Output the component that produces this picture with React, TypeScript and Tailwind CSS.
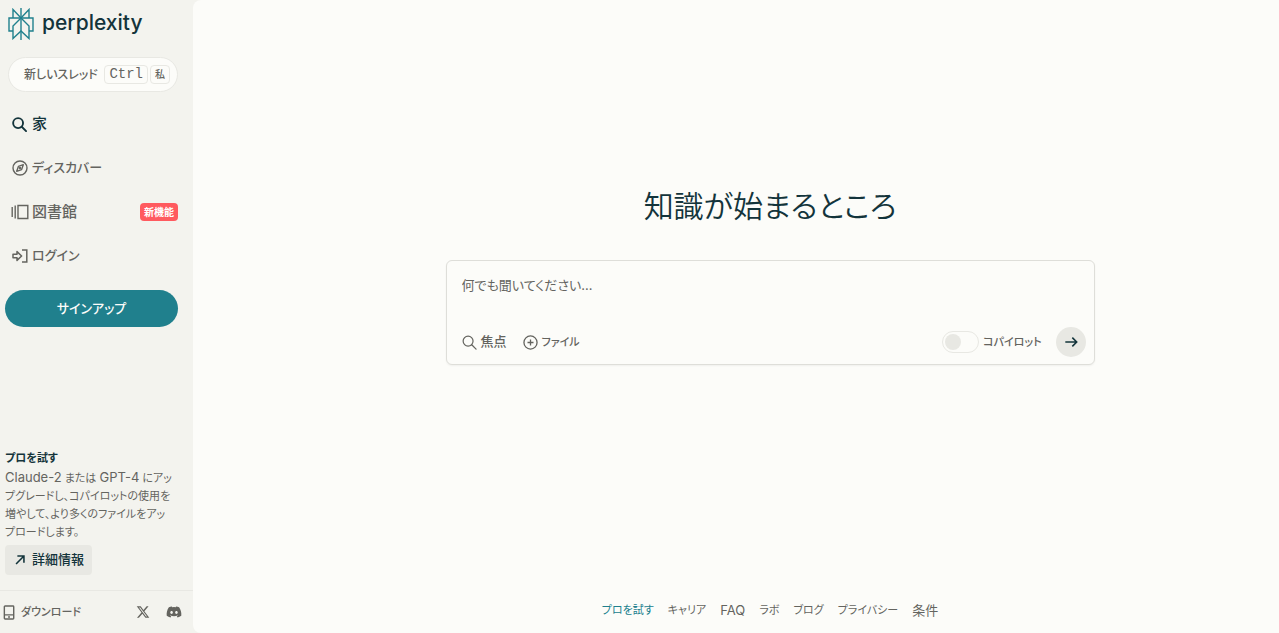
import type { ReactNode } from "react";
import { FaDiscord, FaXTwitter } from "react-icons/fa6";

const FOOTER_LINKS = [
  { label: "プロを試す", className: "text-[11px] text-[#20808d]" },
  { label: "キャリア", className: "text-[11px]" },
  { label: "FAQ", className: "text-[13px]" },
  { label: "ラボ", className: "text-[11px]" },
  { label: "ブログ", className: "text-[11px]" },
  { label: "プライバシー", className: "text-[11px]" },
  { label: "条件", className: "text-[13px]" }
];

function Icon({ children, className = "size-4", width = 1.4 }: { children: ReactNode; className?: string; width?: number }) {
  return (
    <svg
      aria-hidden="true"
      viewBox="0 0 16 16"
      fill="none"
      stroke="currentColor"
      strokeWidth={width}
      className={`shrink-0 ${className}`}
    >
      {children}
    </svg>
  );
}

function SearchIcon({ width, className }: { width?: number; className?: string }) {
  return (
    <Icon width={width} className={className}>
      <circle cx="6.5" cy="6.5" r="5.3" />
      <path d="M10.4 10.4 15 15" strokeLinecap="round" />
    </Icon>
  );
}

function CompassIcon() {
  return (
    <Icon width={1.4}>
      <circle cx="8" cy="8" r="7" />
      <path d="M11.3 4.7 9.6 9.6 4.7 11.3 6.4 6.4Z" strokeLinejoin="round" />
      <circle cx="8" cy="8" r=".5" fill="currentColor" />
    </Icon>
  );
}

function LibraryIcon() {
  return (
    <svg aria-hidden="true" viewBox="0 0 18 16" fill="none" stroke="currentColor" strokeWidth="1.4" className="-ml-px h-4 w-[18px] shrink-0">
      <path d="M1.2 3v10M4.2 1.5v13" />
      <path d="M7 1.5h9.8v13H7z" />
    </svg>
  );
}

function LoginIcon() {
  return (
    <Icon width={1.5}>
      <path d="M1 6.3h4V3.6L9.6 8 5 12.4V9.7H1Z" strokeLinejoin="round" />
      <path d="M10 2h4.8v12H10" />
    </Icon>
  );
}

function Logo() {
  return (
    <a href="#" className="flex items-start gap-2 text-[#13343b]">
      <svg aria-hidden="true" viewBox="0 0 26 32" fill="none" stroke="#20808d" strokeWidth="1.4" className="h-8 w-[26px]">
        <path d="M13 0v32" />
        <path d="M5 10V1.5L13 10l8-8.500V10" />
        <path d="M5 23H1V10h24v13h-4" />
        <path d="M13 10 5 18v12.500l8-7.500 8 7.500V18l-8-8" />
      </svg>
      <span className="font-[Inter,sans-serif] text-[21px] leading-[30px] font-medium">perplexity</span>
    </a>
  );
}

interface NavItemProps {
  icon: ReactNode;
  label: string;
  active?: boolean;
  kana?: boolean;
  badge?: string;
}

function NavItem({ icon, label, active, kana, badge }: NavItemProps) {
  return (
    <li>
      <a
        href="#"
        className={`flex h-11 items-center gap-1 pr-[15px] pl-3 font-medium ${kana ? "text-[13px]" : "text-[15px]"} ${active ? "text-[#13343b]" : "text-[#64645f]"}`}
      >
        <span className="flex w-4">{icon}</span>
        <span>{label}</span>
        {badge && (
          <span className="ml-auto rounded-sm bg-[#ff5a5f] px-1 text-[10px] leading-[18px] font-bold text-white">{badge}</span>
        )}
      </a>
    </li>
  );
}

function Sidebar() {
  return (
    <aside className="flex w-[193px] shrink-0 flex-col">
      <div className="px-2 pt-2">
        <Logo />
      </div>
      <div className="mt-[17px] pr-[15px] pl-2">
        <button className="flex h-[35px] w-full items-center rounded-full border border-[#e8e8e3] bg-[#fcfcf9] pr-[7px] pl-[15px] text-xs font-medium text-[#64645f]">
          新しいスレッド
          <kbd className="ml-auto rounded border border-[#e8e8e3] px-1 font-['Liberation_Mono',monospace] text-sm leading-[17px] font-normal">
            Ctrl
          </kbd>
          <kbd className="ml-0.5 rounded border border-[#e8e8e3] px-1 font-[inherit] text-[10px] leading-[17px]">私</kbd>
        </button>
      </div>
      <nav className="mt-2.5">
        <ul>
          <NavItem icon={<SearchIcon width={2} className="size-[15px]" />} label="家" active />
          <NavItem icon={<CompassIcon />} label="ディスカバー" kana />
          <NavItem icon={<LibraryIcon />} label="図書館" badge="新機能" />
          <NavItem icon={<LoginIcon />} label="ログイン" kana />
        </ul>
      </nav>
      <div className="mt-3 pr-[15px] pl-[5px]">
        <button className="h-[37px] w-full rounded-full bg-[#20808d] text-[13px] font-medium text-[#fcfcf9]">サインアップ</button>
      </div>

      <section className="mt-auto pb-[15px] pl-[5px]">
        <h2 className="text-[11px] leading-5 font-bold text-[#13343b]">プロを試す</h2>
        <p className="text-[11px] leading-[18px] whitespace-nowrap text-[#64645f]">
          <span className="text-[13px]">Claude-2</span> または <span className="text-[13px]">GPT-4</span> にアッ
          <br />
          プグレードし、コパイロットの使用を
          <br />
          増やして、より多くのファイルをアッ
          <br />
          プロードします。
        </p>
        <button className="mt-1 flex h-[30px] items-center gap-[5px] rounded bg-[#e8e8e3] px-2 text-[13px] font-medium text-[#13343b]">
          <Icon className="size-3.5" width={1.8}>
            <path d="M3.500 12.500 12.500 3.500M5 3.500h7.500V11" />
          </Icon>
          詳細情報
        </button>
      </section>

      <div className="flex h-[43px] items-center border-t border-[#e8e8e3] pr-[11px] pl-[2px] text-[#64645f]">
        <a href="#" className="flex items-center gap-1 text-[11px] font-medium">
          <Icon className="size-[15px]" width={1.5}>
            <rect x="2.500" y="1" width="10" height="14" rx=".8" />
            <path d="M2.500 10.500h10M6.500 12.800h2" />
          </Icon>
          ダウンロード
        </a>
        <a href="#" aria-label="X" className="ml-auto">
          <FaXTwitter className="size-3.5" />
        </a>
        <a href="#" aria-label="Discord" className="ml-4">
          <FaDiscord className="size-4" />
        </a>
      </div>
    </aside>
  );
}

function AskBox() {
  return (
    <form className="w-full max-w-[649px] rounded-md border border-[#deded9] bg-[#fcfcf9] pt-3.5 pr-2 pb-[7px] pl-[15px] shadow-xs">
      <textarea
        aria-label="質問"
        placeholder="何でも聞いてください…"
        className="block h-[52px] w-full resize-none bg-transparent text-[13px] leading-5 text-[#13343b] outline-none placeholder:text-[#64645f]"
      />
      <div className="flex h-[30px] items-center text-[11px] font-medium text-[#64645f]">
        <button type="button" className="flex items-center gap-1 text-[13px]">
          <SearchIcon className="size-[15px]" width={1.3} />
          焦点
        </button>
        <button type="button" className="ml-4 flex items-center gap-1">
          <Icon className="size-[15px]" width={1.4}>
            <circle cx="8" cy="8" r="7" />
            <path d="M8 4.800v6.400M4.800 8h6.400" />
          </Icon>
          ファイル
        </button>
        <label className="ml-auto flex items-center gap-1">
          <input
            type="checkbox"
            role="switch"
            className="flex h-[22px] w-[37px] appearance-none items-center rounded-full border border-[#e8e8e3] px-0.5 before:size-4 before:rounded-full before:bg-[#e8e8e3] checked:justify-end"
          />
          コパイロット
        </label>
        <button type="submit" aria-label="送信" className="ml-3.5 flex size-[30px] items-center justify-center rounded-full bg-[#e8e8e3] text-[#13343b]">
          <Icon className="size-3.5" width={1.8}>
            <path d="M1.500 8h13M9.500 3l5 5-5 5" />
          </Icon>
        </button>
      </div>
    </form>
  );
}

export default function App() {
  return (
    <div className="flex min-h-screen bg-[#f3f3ee] font-[Inter,'Noto_Sans_CJK_JP',sans-serif] [font-feature-settings:'palt']">
      <Sidebar />
      <main className="flex min-w-0 flex-1 flex-col items-center rounded-l-lg bg-[#fcfcf9] pl-[68px]">
        <div className="flex w-full flex-1 flex-col items-center justify-center px-4">
          <h1 className="mb-[34px] text-[30px] leading-10 font-[350] text-[#13343b]">知識が始まるところ</h1>
          <AskBox />
        </div>
        <footer className="flex items-center gap-3.5 pt-[49px] pb-[13px] leading-5 text-[#64645f]">
          {FOOTER_LINKS.map((link) => (
            <a key={link.label} href="#" className={link.className}>
              {link.label}
            </a>
          ))}
        </footer>
      </main>
    </div>
  );
}
